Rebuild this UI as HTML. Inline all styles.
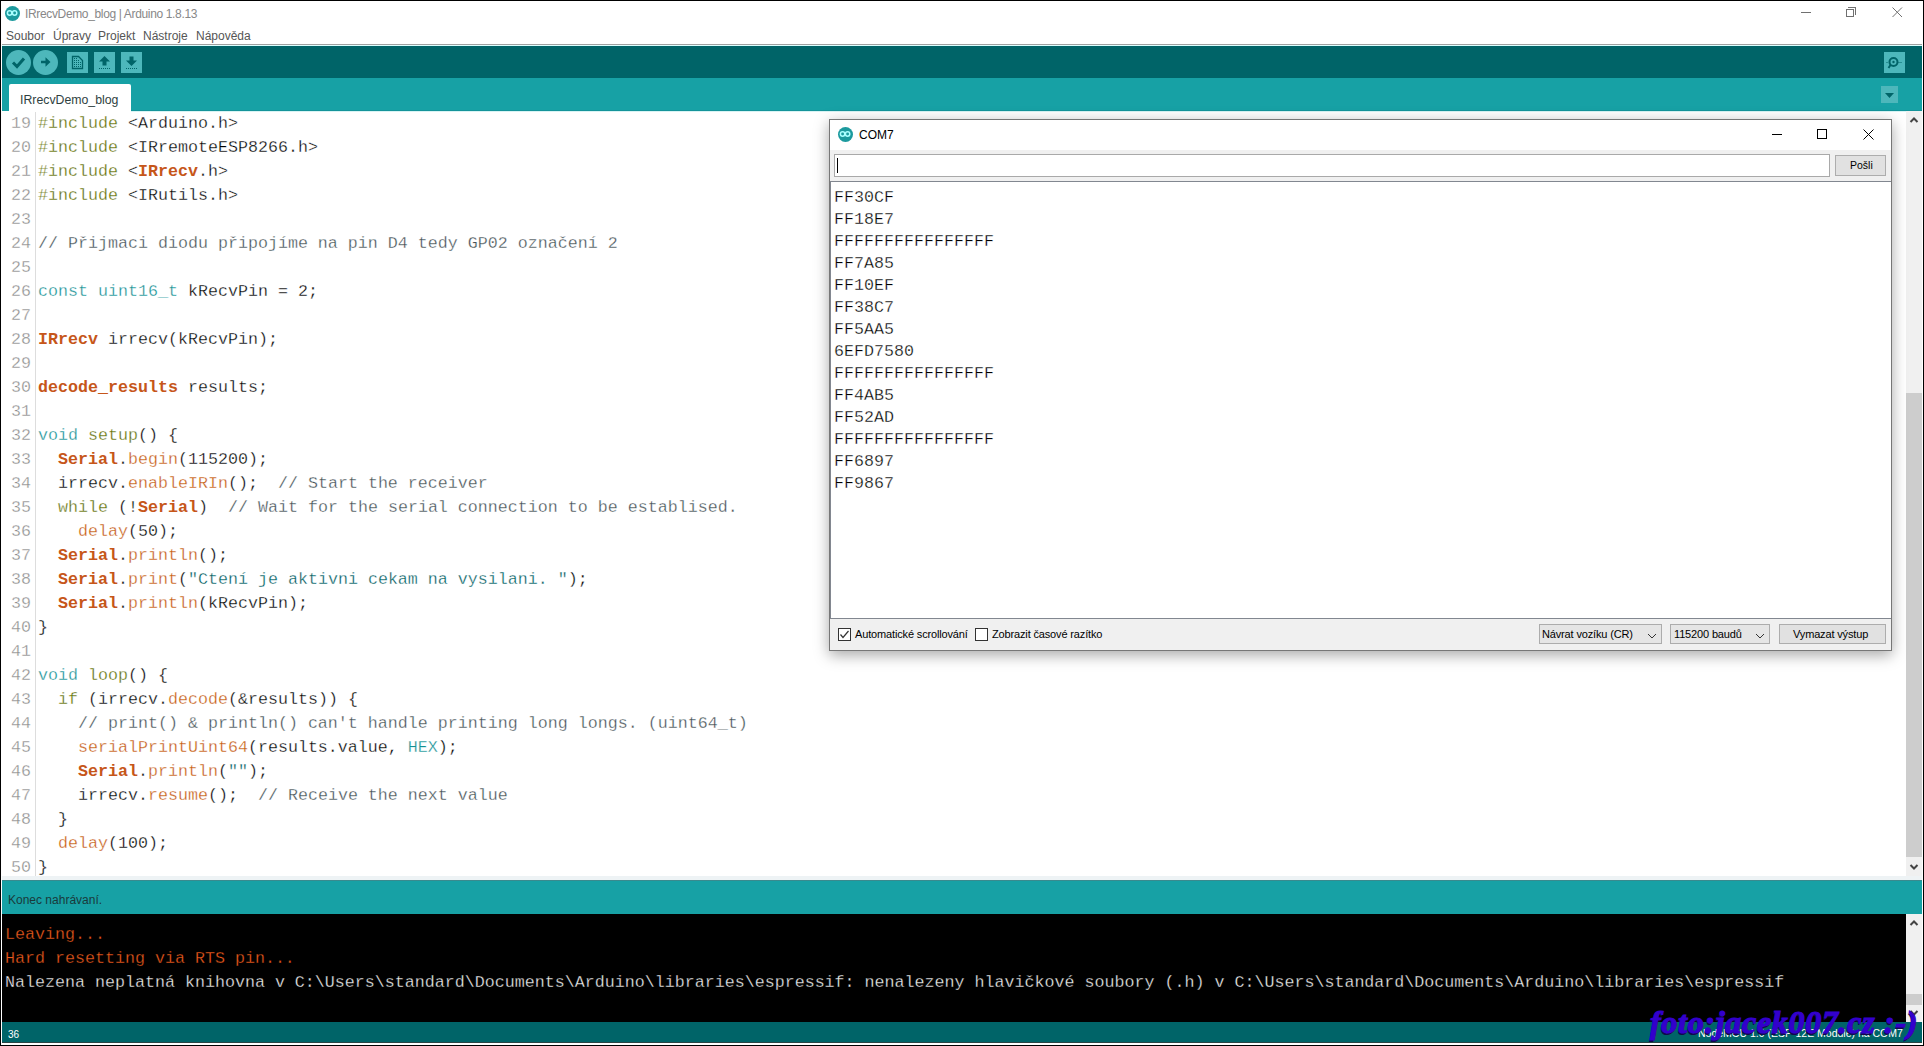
<!DOCTYPE html>
<html><head><meta charset="utf-8">
<style>
*{margin:0;padding:0;box-sizing:border-box}
html,body{width:1924px;height:1046px;overflow:hidden;background:#000}
body{position:relative;font-family:"Liberation Sans",sans-serif}
.a{position:absolute}
.nw{white-space:nowrap}
.mono{font-family:"Liberation Mono",monospace;font-size:16.667px;line-height:24px;white-space:pre;-webkit-text-stroke:0.3px #fff}
.mono.dk{-webkit-text-stroke:0.3px #000}
.pp{color:#5E6D03}
.kw{color:#138F93}
.fn{color:#C4580E}
.kb{color:#C6561A;font-weight:bold;-webkit-text-stroke:0}
.cm{color:#434F54}
.st{color:#005C5F}
.menu{font-size:12px;color:#555;top:29px}
.tbtn{background:#4DB7BB}
</style></head><body>
<!-- window -->
<div class="a" style="left:1px;top:1px;width:1922px;height:1044px;background:#fff"></div>

<!-- title bar -->
<div class="a" style="left:5px;top:6px;width:15px;height:15px;border-radius:50%;background:#1C9A9E"></div>
<svg class="a" style="left:5px;top:6px" width="15" height="15" viewBox="0 0 15 15"><g fill="none" stroke="#aff" stroke-width="1.5"><circle cx="4.6" cy="7" r="2.2"/><circle cx="9.6" cy="7" r="2.2"/></g></svg>
<div class="a nw" style="left:25px;top:7px;font-size:12px;letter-spacing:-0.35px;color:#888">IRrecvDemo_blog | Arduino 1.8.13</div>
<!-- window controls -->
<div class="a" style="left:1801px;top:12px;width:10px;height:1px;background:#707070"></div>
<div class="a" style="left:1846px;top:9px;width:8px;height:8px;border:1px solid #707070"></div>
<div class="a" style="left:1848px;top:7px;width:8px;height:8px;border-top:1px solid #707070;border-right:1px solid #707070"></div>
<svg class="a" style="left:1892px;top:7px" width="11" height="11" viewBox="0 0 11 11"><path d="M0.5 0.5L10 10M10 0.5L0.5 10" stroke="#707070" stroke-width="1"/></svg>

<!-- menu -->
<div class="a nw menu" style="left:6px">Soubor</div>
<div class="a nw menu" style="left:53px">Úpravy</div>
<div class="a nw menu" style="left:98px">Projekt</div>
<div class="a nw menu" style="left:143px">Nástroje</div>
<div class="a nw menu" style="left:196px">Nápověda</div>

<!-- toolbar -->
<div class="a" style="left:2px;top:44px;width:1920px;height:1px;background:#a0a0a0"></div>
<div class="a" style="left:2px;top:45px;width:1920px;height:1px;background:#dff"></div>
<div class="a" style="left:2px;top:46px;width:1920px;height:32px;background:#006468"></div>
<div class="a tbtn" style="left:6px;top:50px;width:25px;height:25px;border-radius:50%"></div>
<svg class="a" style="left:6px;top:50px" width="25" height="25" viewBox="0 0 25 25"><path d="M7 12.5L11 16.5L18 8.5" fill="none" stroke="#006468" stroke-width="3"/></svg>
<div class="a tbtn" style="left:33px;top:50px;width:25px;height:25px;border-radius:50%"></div>
<svg class="a" style="left:33px;top:50px" width="25" height="25" viewBox="0 0 25 25"><path d="M8 10.7h4.5v-3.5l5 4.8l-5 4.8v-3.5h-4.5z" fill="#006468"/></svg>
<div class="a tbtn" style="left:67px;top:52px;width:21px;height:21px"></div>
<svg class="a" style="left:67px;top:52px" width="21" height="21" viewBox="0 0 21 21"><path d="M5.5 4.5h6l4 4v8h-10z" fill="none" stroke="#006468" stroke-width="1.3"/><g fill="#006468"><rect x="7" y="6" width="1" height="1"/><rect x="9" y="6" width="1" height="1"/><rect x="7" y="8" width="1" height="1"/><rect x="9" y="8" width="1" height="1"/><rect x="11" y="8" width="1" height="1"/><rect x="7" y="10" width="1" height="1"/><rect x="9" y="10" width="1" height="1"/><rect x="11" y="10" width="1" height="1"/><rect x="13" y="10" width="1" height="1"/><rect x="7" y="12" width="1" height="1"/><rect x="9" y="12" width="1" height="1"/><rect x="11" y="12" width="1" height="1"/><rect x="13" y="12" width="1" height="1"/><rect x="7" y="14" width="1" height="1"/><rect x="9" y="14" width="1" height="1"/><rect x="11" y="14" width="1" height="1"/><rect x="13" y="14" width="1" height="1"/></g></svg>
<div class="a tbtn" style="left:94px;top:52px;width:21px;height:21px"></div>
<svg class="a" style="left:94px;top:52px" width="21" height="21" viewBox="0 0 21 21"><path d="M10.5 4L16 9.5h-3.5v4h-4v-4H5z" fill="#006468"/><path d="M5 16.5h11" stroke="#006468" stroke-width="1" stroke-dasharray="1 1"/></svg>
<div class="a tbtn" style="left:121px;top:52px;width:21px;height:21px"></div>
<svg class="a" style="left:121px;top:52px" width="21" height="21" viewBox="0 0 21 21"><path d="M10.5 14L16 8.5h-3.5v-4h-4v4H5z" fill="#006468"/><path d="M5 16.5h11" stroke="#006468" stroke-width="1" stroke-dasharray="1 1"/></svg>
<div class="a tbtn" style="left:1884px;top:52px;width:21px;height:21px"></div>
<svg class="a" style="left:1884px;top:52px" width="21" height="21" viewBox="0 0 21 21"><circle cx="9.5" cy="10" r="4" fill="none" stroke="#006468" stroke-width="2"/><circle cx="9.5" cy="10" r="1.2" fill="#006468"/><path d="M6.5 13L4.5 16" stroke="#006468" stroke-width="2"/><path d="M14.5 10.5h4M2.5 10.5h2" stroke="#006468" stroke-width="1" stroke-dasharray="1 1"/></svg>

<!-- tab bar -->
<div class="a" style="left:2px;top:78px;width:1920px;height:33px;background:#17A1A5"></div>
<div class="a" style="left:131px;top:110px;width:1791px;height:1px;background:#14949a"></div>
<div class="a" style="left:9px;top:84px;width:122px;height:27px;background:#fff;border-radius:2px 2px 0 0"></div>
<div class="a nw" style="left:20px;top:93px;font-size:12.3px;color:#2f3f3f">IRrecvDemo_blog</div>
<div class="a" style="left:1881px;top:86px;width:17px;height:17px;background:#4DB7BB"></div>
<svg class="a" style="left:1881px;top:86px" width="17" height="17" viewBox="0 0 17 17"><path d="M4 7h9l-4.5 5z" fill="#006468"/></svg>

<!-- editor -->
<div class="a" style="left:131px;top:111px;width:1791px;height:1px;background:#d8f4f4"></div>
<div class="a" style="left:2px;top:112px;width:1904px;height:764px;background:#fff;overflow:hidden">
  <div class="a" style="left:33px;top:0;width:1px;height:765px;background:#ddd"></div>
  <div class="a mono" style="left:0;top:0px;width:29px;text-align:right;color:#8c8c8c">19
20
21
22
23
24
25
26
27
28
29
30
31
32
33
34
35
36
37
38
39
40
41
42
43
44
45
46
47
48
49
50</div>
  <div class="a mono" style="left:36px;top:0px;color:#000"><span class="pp">#include</span> &lt;Arduino.h&gt;
<span class="pp">#include</span> &lt;IRremoteESP8266.h&gt;
<span class="pp">#include</span> &lt;<span class="kb">IRrecv</span>.h&gt;
<span class="pp">#include</span> &lt;IRutils.h&gt;

<span class="cm">// Přijmaci diodu připojíme na pin D4 tedy GP02 označení 2</span>

<span class="kw">const</span> <span class="kw">uint16_t</span> kRecvPin = 2;

<span class="kb">IRrecv</span> irrecv(kRecvPin);

<span class="kb">decode_results</span> results;

<span class="kw">void</span> <span class="pp">setup</span>() {
  <span class="kb">Serial</span>.<span class="fn">begin</span>(115200);
  irrecv.<span class="fn">enableIRIn</span>();  <span class="cm">// Start the receiver</span>
  <span class="pp">while</span> (!<span class="kb">Serial</span>)  <span class="cm">// Wait for the serial connection to be establised.</span>
    <span class="fn">delay</span>(50);
  <span class="kb">Serial</span>.<span class="fn">println</span>();
  <span class="kb">Serial</span>.<span class="fn">print</span>(<span class="st">&quot;Ctení je aktivni cekam na vysilani. &quot;</span>);
  <span class="kb">Serial</span>.<span class="fn">println</span>(kRecvPin);
}

<span class="kw">void</span> <span class="pp">loop</span>() {
  <span class="pp">if</span> (irrecv.<span class="fn">decode</span>(&amp;results)) {
    <span class="cm">// print() &amp; println() can&#x27;t handle printing long longs. (uint64_t)</span>
    <span class="fn">serialPrintUint64</span>(results.value, <span class="kw">HEX</span>);
    <span class="kb">Serial</span>.<span class="fn">println</span>(<span class="st">&quot;&quot;</span>);
    irrecv.<span class="fn">resume</span>();  <span class="cm">// Receive the next value</span>
  }
  <span class="fn">delay</span>(100);
}</div>
</div>
<div class="a" style="left:2px;top:876px;width:1920px;height:4px;background:#eef3f5"></div>
<!-- editor scrollbar -->
<div class="a" style="left:1906px;top:111px;width:16px;height:765px;background:#f0f0f0"></div>
<div class="a" style="left:1906px;top:393px;width:16px;height:464px;background:#cdcdcd"></div>
<svg class="a" style="left:1906px;top:115px" width="16" height="10" viewBox="0 0 16 10"><path d="M4.5 7L8 3.5L11.5 7" fill="none" stroke="#444" stroke-width="2"/></svg>
<svg class="a" style="left:1906px;top:862px" width="16" height="10" viewBox="0 0 16 10"><path d="M4.5 3L8 6.5L11.5 3" fill="none" stroke="#444" stroke-width="2"/></svg>

<!-- status -->
<div class="a" style="left:2px;top:880px;width:1920px;height:34px;background:#17A1A5"></div>
<div class="a" style="left:2px;top:880px;width:1920px;height:1px;background:#3a8a8e"></div>
<div class="a nw" style="left:8px;top:893px;font-size:12px;color:#1a3a3b">Konec nahrávaní.</div>

<!-- console -->
<div class="a" style="left:2px;top:914px;width:1904px;height:108px;background:#000"></div>
<div class="a mono dk" style="left:5px;top:923px;color:#EC5A1C">Leaving...
Hard resetting via RTS pin...</div>
<div class="a mono dk" style="left:5px;top:971px;color:#eee">Nalezena neplatná knihovna v C:\Users\standard\Documents\Arduino\libraries\espressif: nenalezeny hlavičkové soubory (.h) v C:\Users\standard\Documents\Arduino\libraries\espressif</div>
<div class="a" style="left:1906px;top:914px;width:16px;height:108px;background:#f0f0f0"></div>
<div class="a" style="left:1906px;top:994px;width:16px;height:11px;background:#cdcdcd"></div>
<svg class="a" style="left:1906px;top:918px" width="16" height="10" viewBox="0 0 16 10"><path d="M4.5 7L8 3.5L11.5 7" fill="none" stroke="#444" stroke-width="2"/></svg>
<svg class="a" style="left:1906px;top:1008px" width="16" height="10" viewBox="0 0 16 10"><path d="M4.5 3L8 6.5L11.5 3" fill="none" stroke="#444" stroke-width="2"/></svg>

<!-- line status -->
<div class="a" style="left:2px;top:1022px;width:1920px;height:20px;background:#006468"></div>
<div class="a" style="left:2px;top:1042px;width:1920px;height:1px;background:#2a4444"></div>
<div class="a nw" style="left:8px;top:1029px;font-size:10px;color:#fff">36</div>
<div class="a nw" style="left:1698px;top:1027px;font-size:10.5px;color:#fff">NodeMCU 1.0 (ESP-12E Module) na COM7</div>

<!-- serial monitor shadow -->
<div class="a" style="left:829px;top:119px;width:1063px;height:532px;box-shadow:0 4px 14px rgba(0,0,0,0.35)"></div>
<!-- serial monitor -->
<div class="a" style="left:829px;top:119px;width:1063px;height:532px;background:#f0f0f0;border:1px solid #777"></div>
<div class="a" style="left:830px;top:120px;width:1061px;height:30px;background:#fff"></div>
<div class="a" style="left:838px;top:127px;width:15px;height:15px;border-radius:50%;background:#1C9A9E"></div>
<svg class="a" style="left:838px;top:127px" width="15" height="15" viewBox="0 0 15 15"><g fill="none" stroke="#aff" stroke-width="1.5"><circle cx="4.6" cy="7" r="2.2"/><circle cx="9.6" cy="7" r="2.2"/></g></svg>
<div class="a nw" style="left:859px;top:128px;font-size:12px;color:#000">COM7</div>
<div class="a" style="left:1772px;top:134px;width:10px;height:1px;background:#000"></div>
<div class="a" style="left:1817px;top:129px;width:10px;height:10px;border:1px solid #000"></div>
<svg class="a" style="left:1863px;top:129px" width="11" height="11" viewBox="0 0 11 11"><path d="M0.5 0.5L10.5 10.5M10.5 0.5L0.5 10.5" stroke="#000" stroke-width="1"/></svg>
<!-- input -->
<div class="a" style="left:834px;top:154px;width:996px;height:23px;background:#fff;border:1px solid #a9a9a9"></div>
<div class="a" style="left:837px;top:158px;width:1px;height:15px;background:#000"></div>
<div class="a" style="left:1835px;top:155px;width:51px;height:21px;background:#e1e1e1;border:1px solid #adadad"></div>
<div class="a nw" style="left:1850px;top:159px;font-size:10.5px;color:#000">Pošli</div>
<!-- text area -->
<div class="a" style="left:830px;top:181px;width:1061px;height:438px;background:#fff;border-top:1px solid #828790;border-left:1px solid #828790;border-bottom:1px solid #828790"></div>
<div class="a mono" style="left:834px;top:187px;line-height:22px;color:#000">FF30CF
FF18E7
FFFFFFFFFFFFFFFF
FF7A85
FF10EF
FF38C7
FF5AA5
6EFD7580
FFFFFFFFFFFFFFFF
FF4AB5
FF52AD
FFFFFFFFFFFFFFFF
FF6897
FF9867</div>
<!-- bottom bar -->
<div class="a" style="left:838px;top:628px;width:13px;height:13px;border:1px solid #333;background:#fff"></div>
<svg class="a" style="left:838px;top:628px" width="13" height="13" viewBox="0 0 13 13"><path d="M2.5 6.5L5 9.5L10.5 3" fill="none" stroke="#333" stroke-width="1.2"/></svg>
<div class="a nw" style="left:855px;top:628px;font-size:11px;letter-spacing:-0.15px;color:#000">Automatické scrollování</div>
<div class="a" style="left:975px;top:628px;width:13px;height:13px;border:1px solid #333;background:#fff"></div>
<div class="a nw" style="left:992px;top:628px;font-size:11px;letter-spacing:-0.15px;color:#000">Zobrazit časové razítko</div>
<div class="a" style="left:1539px;top:624px;width:123px;height:20px;background:#e5e5e5;border:1px solid #acacac"></div>
<div class="a nw" style="left:1542px;top:628px;font-size:11px;letter-spacing:-0.15px;color:#000">Návrat vozíku (CR)</div>
<svg class="a" style="left:1647px;top:632px" width="10" height="8" viewBox="0 0 10 8"><path d="M1 2L5 6L9 2" fill="none" stroke="#333" stroke-width="1"/></svg>
<div class="a" style="left:1670px;top:624px;width:100px;height:20px;background:#e5e5e5;border:1px solid #acacac"></div>
<div class="a nw" style="left:1674px;top:628px;font-size:11px;letter-spacing:-0.15px;color:#000">115200 baudů</div>
<svg class="a" style="left:1755px;top:632px" width="10" height="8" viewBox="0 0 10 8"><path d="M1 2L5 6L9 2" fill="none" stroke="#333" stroke-width="1"/></svg>
<div class="a" style="left:1779px;top:624px;width:107px;height:20px;background:#e1e1e1;border:1px solid #adadad"></div>
<div class="a nw" style="left:1793px;top:628px;font-size:11px;letter-spacing:-0.15px;color:#000">Vymazat výstup</div>

<!-- watermark -->
<div class="a nw" style="left:1650px;top:1004px;font-family:'Liberation Serif',serif;font-size:32px;font-style:italic;font-weight:bold;letter-spacing:0.7px;color:#3300cc;-webkit-text-stroke:1.2px #3300cc;text-shadow:-1px 1.5px 0 #12084a">foto:jacek007.cz :-)</div>
</body></html>
